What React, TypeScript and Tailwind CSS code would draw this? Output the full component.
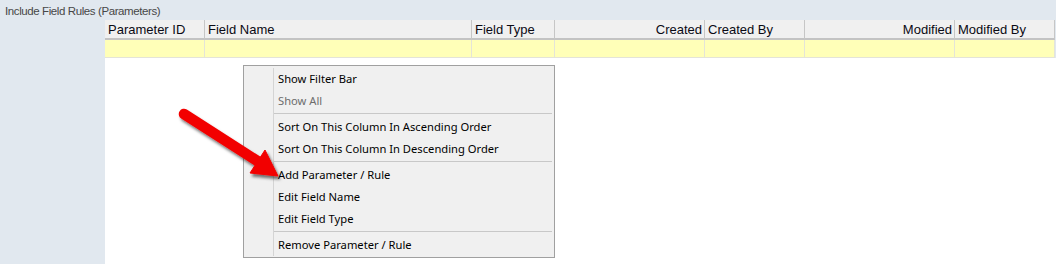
import React from "react";

type Col = { label: string; width: string; align?: "right" };

const columns: Col[] = [
  { label: "Parameter ID", width: "w-[100px]" },
  { label: "Field Name", width: "w-[267px]" },
  { label: "Field Type", width: "w-[83px]" },
  { label: "Created", width: "w-[150px]", align: "right" },
  { label: "Created By", width: "w-[100px]" },
  { label: "Modified", width: "w-[150px]", align: "right" },
  { label: "Modified By", width: "w-[100px]" },
];

type MenuEntry = { label: string; disabled?: boolean } | "sep";

const menu: MenuEntry[] = [
  { label: "Show Filter Bar" },
  { label: "Show All", disabled: true },
  "sep",
  { label: "Sort On This Column In Ascending Order" },
  { label: "Sort On This Column In Descending Order" },
  "sep",
  { label: "Add Parameter / Rule" },
  { label: "Edit Field Name" },
  { label: "Edit Field Type" },
  "sep",
  { label: "Remove Parameter / Rule" },
];

function ContextMenu() {
  return (
    <div className="absolute left-[138px] top-[45px] w-[312px] border border-[#a0a0a0] bg-[#f0f0f0] pt-[2px] pb-px pl-[2px] font-['Noto_Sans',sans-serif] text-[11.2px] text-black">
      <div className="flex">
        <div className="w-[27px] shrink-0" />
        <div className="flex-1 border-l border-[#d4d4d4] pr-[2px]">
          {menu.map((m, i) =>
            m === "sep" ? (
              <div key={i} className="h-[4px] pt-px">
                <div className="h-px bg-[#c8c8c8]" />
              </div>
            ) : (
              <div
                key={i}
                className={
                  "flex h-[22px] items-center pb-px pl-[4px] leading-none " +
                  (m.disabled ? "text-[#6d6d6d]" : "")
                }
              >
                {m.label}
              </div>
            ),
          )}
        </div>
      </div>
    </div>
  );
}

function Arrow() {
  return (
    <svg
      className="pointer-events-none absolute left-0 top-0"
      width="300"
      height="200"
      viewBox="0 0 300 200"
    >
      <defs>
        <filter id="sh" x="-20%" y="-20%" width="140%" height="140%">
          <feDropShadow dx="2" dy="3" stdDeviation="1.6" floodColor="#000" floodOpacity="0.55" />
        </filter>
      </defs>
      <g filter="url(#sh)" fill="#f20000" stroke="#f20000">
        <line x1="184" y1="114" x2="259" y2="162" strokeWidth="10.5" strokeLinecap="round" />
        <polygon points="278,176 250,173 265,150" strokeWidth="1" strokeLinejoin="round" />
      </g>
    </svg>
  );
}

export default function App() {
  return (
    <div className="relative h-[264px] w-[1056px] overflow-hidden bg-[#e1e8ef] font-['Liberation_Sans',Arial,sans-serif]">
      <div className="h-[20px] pl-[5px] pt-[6px] text-[11.5px] leading-none tracking-[-0.4px] text-[#474747]">
        Include Field Rules (Parameters)
      </div>
      <div className="flex h-[244px]">
        <div className="w-[105px] shrink-0" />
        <div className="relative flex-1 bg-white">
          <div className="flex h-[20px] bg-[#e1e8ef]">
            {columns.map((c) => (
              <div
                key={c.label}
                className={
                  c.width +
                  " flex shrink-0 items-center border-r border-b-[2px] border-r-[#c6c6c6] border-b-[#c3c3c3] bg-[#f0f0f0] text-[13px] leading-none text-[#0a0a14] " +
                  (c.align === "right" ? "justify-end pr-[2px]" : "pl-[3px]")
                }
              >
                {c.label}
              </div>
            ))}
          </div>
          <div className="flex h-[18px] bg-[#e1e8ef]">
            {columns.map((c) => (
              <div
                key={c.label}
                className={c.width + " shrink-0 border-r border-b border-[#e4e4d8] bg-[#ffffb8]"}
              />
            ))}
          </div>
          <ContextMenu />
        </div>
      </div>
      <Arrow />
    </div>
  );
}
